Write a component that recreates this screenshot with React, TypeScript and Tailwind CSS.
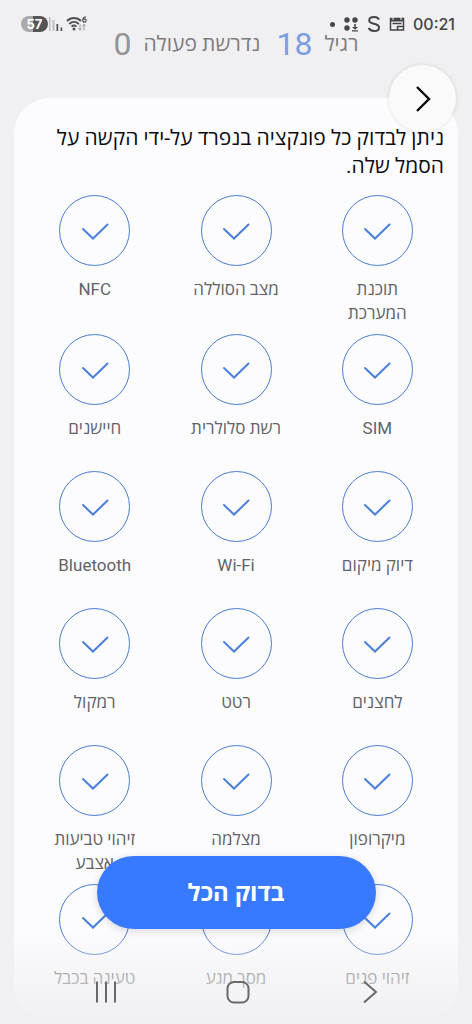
import React from "react";

const checks: string[] = [
  "תוכנת המערכת",
  "מצב הסוללה",
  "NFC",
  "SIM",
  "רשת סלולרית",
  "חיישנים",
  "דיוק מיקום",
  "Wi-Fi",
  "Bluetooth",
  "לחצנים",
  "רטט",
  "רמקול",
  "מיקרופון",
  "מצלמה",
  "זיהוי טביעות אצבע",
  "זיהוי פנים",
  "מסך מגע",
  "טעינה בכבל",
];

function CheckItem({ label }: { label: string }) {
  return (
    <li className="flex min-h-[137px] justify-center pb-[9px]">
      <button type="button" className="flex w-[100px] flex-col items-center justify-start">
        <span className="flex size-[71px] shrink-0 items-center justify-center rounded-full border-[1.5px] border-[#4a7dd2]">
          <svg viewBox="0 0 28 18" className="h-[18px] w-7" fill="none" stroke="#4a80dc" strokeWidth="2" strokeLinecap="round" aria-hidden="true">
            <path d="M2 7 L12 16.500 L26.500 2.500" />
          </svg>
        </span>
        <span className="mt-[11px] text-center text-[17px] leading-6 text-[#626266]">{label}</span>
      </button>
    </li>
  );
}

function StatusBar() {
  return (
    <div className="absolute inset-x-0 top-0 flex h-12 items-center justify-between px-[17px] text-[#454547]">
      <div className="flex items-center gap-2">
        <span className="font-[Inter,sans-serif] text-base font-medium">00:21</span>
        <svg viewBox="0 0 16 14" className="h-[14px] w-4" fill="none" stroke="currentColor" strokeWidth="1.500" aria-hidden="true">
          <rect x="1.500" y="1.500" width="13" height="11.500" />
          <path d="M1 3 H15" strokeWidth="3" />
          <path d="M4 0 V3 M12 0 V3" stroke="#f0f0f2" strokeWidth="1" />
          <path d="M3.500 6.500 H12.500 M8 9.500 H14 M8.500 9 V13" />
        </svg>
        <svg viewBox="0 0 14 18" className="h-[18px] w-[14px]" fill="none" stroke="currentColor" strokeWidth="2" aria-hidden="true">
          <path d="M12 4.500 C11 2.600 9.300 2 7.200 2 C4.300 2 2.200 3.300 2.200 5.400 C2.200 10 12 7.400 12 12.400 C12 14.600 9.900 16 7.200 16 C4.600 16 2.700 15 1.600 13" />
        </svg>
        <svg viewBox="0 0 16 16" className="size-4" fill="currentColor" aria-hidden="true">
          <circle cx="4" cy="4" r="2.700" />
          <circle cx="12" cy="4" r="2.700" />
          <circle cx="4" cy="12" r="2.700" />
          <path d="M11.200 8 H12.800 V11 H15 L12 13.800 L9 11 H11.200 Z M9 14.300 H15 V15.500 H9 Z" />
        </svg>
        <span className="size-[5px] rounded-full bg-[#454547]" />
      </div>
      <div className="flex items-center pl-1">
        <svg viewBox="0 0 22 16" className="h-4 w-[22px]" fill="none" aria-hidden="true">
          <g stroke="#505052" strokeWidth="1.800">
            <path d="M1 5 C5 1 11 1 15 5" />
            <path d="M3.200 8 C6 5.200 10 5.200 12.800 8" />
            <path d="M5.500 10.600 C7 9.200 9 9.200 10.500 10.600" />
          </g>
          <circle cx="8" cy="13" r="1.500" fill="#505052" />
          <path d="M20 1.200 C17.800 0.600 16.800 2 16.800 4 A1.700 1.700 0 1 0 18.500 2.800 C17.600 2.800 17 3.400 16.800 4" stroke="#505052" strokeWidth="1.200" />
          <path d="M14 8 V14 M12.300 12.400 L14 14.200 L15.700 12.400 M18 14.500 V8.500 M16.300 10.200 L18 8.400 L19.700 10.200" stroke="#98989b" />
        </svg>
        <svg viewBox="0 0 14 14" className="ml-px mr-[3px] h-[14px] w-[14px]" aria-hidden="true">
          <path d="M0 0 H1.500 V14 H0 Z M3.500 3 H5.500 V14 H3.500 Z" fill="#bdbdc0" />
          <path d="M7.500 7 H9.200 V14 H7.500 Z M11.500 10.500 H13.200 V14 H11.500 Z" fill="#505052" />
        </svg>
        <span className="flex h-4 w-[27px] items-center justify-center rounded-full bg-linear-to-r from-[#aaaaad] from-45% to-[#555558] to-45% font-[Inter,sans-serif] text-[13px] font-bold leading-4 text-white">
          57
        </span>
      </div>
    </div>
  );
}

function NavigationBar() {
  return (
    <nav className="grid h-16 grid-cols-3 place-items-center pl-10 pr-9 text-[#69696c]">
      <button type="button" aria-label="חזרה">
        <svg viewBox="0 0 24 24" className="size-6" fill="none" stroke="currentColor" strokeWidth="2" aria-hidden="true">
          <path d="M6 1.500 L18 12 L6 22.500" />
        </svg>
      </button>
      <button type="button" aria-label="בית">
        <svg viewBox="0 0 24 24" className="size-6" fill="none" stroke="currentColor" strokeWidth="2" aria-hidden="true">
          <rect x="1.500" y="2" width="21" height="20.500" rx="6.500" />
        </svg>
      </button>
      <button type="button" aria-label="אחרונים">
        <svg viewBox="0 0 24 24" className="size-6" fill="none" stroke="currentColor" strokeWidth="2" aria-hidden="true">
          <path d="M3 1.500 V22.500 M12 1.500 V22.500 M21 1.500 V22.500" />
        </svg>
      </button>
    </nav>
  );
}

export default function App() {
  return (
    <div dir="rtl" className="relative h-screen overflow-hidden bg-[#f0f0f2] font-[Roboto,'Open_Sans',sans-serif]">
      <header className="flex h-[98px] items-start justify-center gap-3 pt-6 text-[21px] leading-10 text-[#7c7c7f]">
        <span>רגיל</span>
        <span className="text-[32px] text-[#7c9ee0]">18</span>
        <span className="mr-1">נדרשת פעולה</span>
        <span className="text-[32px] text-[#949497]">0</span>
      </header>

      <main className="mx-[14px] rounded-[36px] bg-[#fcfcfe] px-[10px] pt-[26px]">
        <p className="px-1 text-[21px] leading-7 text-[#0c0c0e]">
          ניתן לבדוק כל פונקציה בנפרד על-ידי הקשה על הסמל שלה.
        </p>
        <ul className="mt-[15px] grid grid-cols-3">
          {checks.map((label) => (
            <CheckItem key={label} label={label} />
          ))}
        </ul>
      </main>

      <StatusBar />

      <button
        type="button"
        aria-label="הקודם"
        className="absolute right-4 top-[65px] flex size-[67px] items-center justify-center rounded-full bg-[#fafafb] shadow-[0_0_4px_rgba(0,0,0,0.12)]"
      >
        <svg viewBox="0 0 16 28" className="h-7 w-4" fill="none" stroke="#09090a" strokeWidth="2.400" aria-hidden="true">
          <path d="M2 2 L14 14 L2 26" />
        </svg>
      </button>

      <div className="pointer-events-none absolute inset-x-0 bottom-0 h-24 bg-linear-to-b from-[#f0f0f2]/0 via-[#f0f0f2]/55 to-[#f0f0f2]" />
      <div className="absolute inset-x-0 bottom-0">
        <div className="flex justify-center">
          <button
            type="button"
            className="h-[73px] w-[279px] rounded-full bg-[#387aff] text-2xl font-bold text-white shadow-[0_2px_8px_rgba(0,0,0,0.15)]"
          >
            בדוק הכל
          </button>
        </div>
        <div className="pt-[31px]">
          <NavigationBar />
        </div>
      </div>
    </div>
  );
}
